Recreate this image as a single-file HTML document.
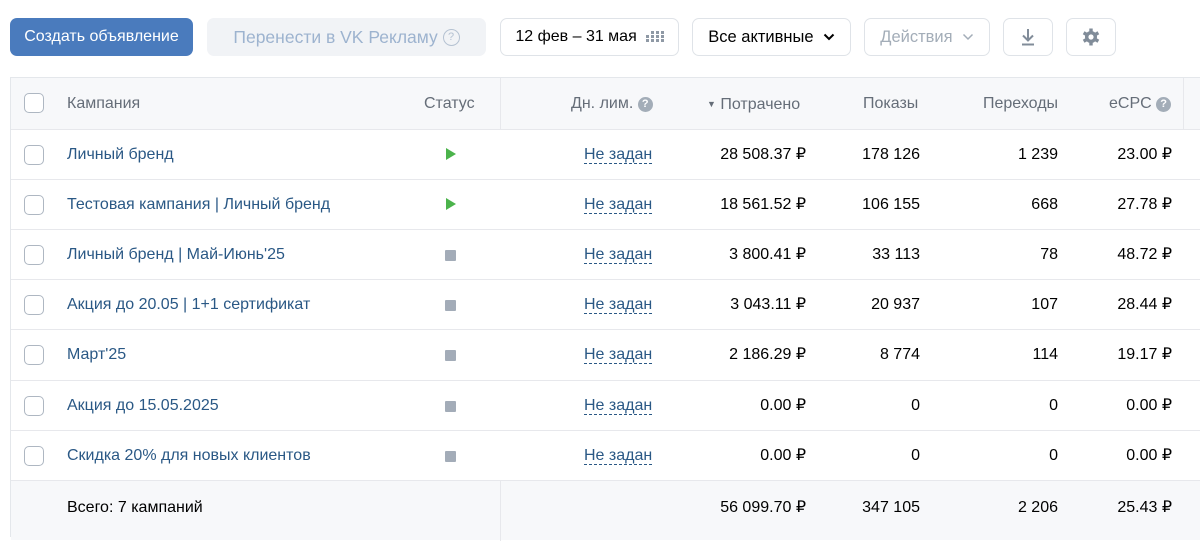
<!DOCTYPE html>
<html><head><meta charset="utf-8"><style>
*{box-sizing:border-box;margin:0;padding:0}
body{width:1200px;height:529px;overflow:hidden;background:#fff;font-family:"Liberation Sans",Arial,sans-serif;font-size:16px;color:#000;position:relative}
.a{position:absolute}
.btn{position:absolute;top:18px;height:38px;border-radius:7px;display:flex;align-items:center;justify-content:center;font-size:16px}
.ob{border:1px solid #dfe3e8;background:#fff}
.tbl{position:absolute;left:10px;top:77px;width:1200px;height:460px;border:1px solid #e4e7eb;border-right:none}
.row{position:absolute;left:0;width:100%;height:50px;border-top:1px solid #e7e8ec}
.cb{position:absolute;left:13px;top:15px;width:20px;height:20px;border:1.5px solid #aeb7c2;border-radius:5px;background:#fff}
.c{position:absolute;top:16px;line-height:18px;white-space:nowrap}
.nm{left:56px;color:#2a5885}
.r{text-align:right}
.lim{left:573px;color:#2a5885;border-bottom:1px dashed #2a5885;line-height:17px}
.play{position:absolute;left:435px;top:18px;width:0;height:0;border-left:10px solid #4bb34b;border-top:6px solid transparent;border-bottom:6px solid transparent}
.stop{position:absolute;left:434px;top:20px;width:11px;height:11px;background:#a3acb8;border-radius:1px}
.h{color:#656d78}
.q{display:inline-block;width:15px;height:15px;border-radius:50%;background:#a3adb8;color:#fff;font-size:11px;font-weight:bold;text-align:center;line-height:15px;vertical-align:1px}
</style></head><body>
<div class="btn" style="left:10px;width:183px;background:#4a7bbd;color:#fff">Создать объявление</div>
<div class="btn" style="left:207px;width:279px;background:#f1f3f6;color:#9db3cf;font-size:17.5px">Перенести в VK Рекламу&nbsp;<span style="display:inline-block;width:17px;height:17px;border:1.5px solid #b5c2d2;border-radius:50%;font-size:11px;line-height:14px;text-align:center;color:#b5c2d2">?</span></div>
<div class="btn ob" style="left:500px;width:179px">12 фев – 31 мая&nbsp;&nbsp;<svg width="18" height="12" viewBox="0 0 18 12"><g fill="#8f99a5"><rect x="0" y="8" width="3" height="3"/><rect x="5" y="0" width="3" height="3"/><rect x="5" y="4" width="3" height="3"/><rect x="5" y="8" width="3" height="3"/><rect x="10" y="0" width="3" height="3"/><rect x="10" y="4" width="3" height="3"/><rect x="10" y="8" width="3" height="3"/><rect x="15" y="0" width="3" height="3"/><rect x="15" y="4" width="3" height="3"/><rect x="15" y="8" width="3" height="3"/><rect x="0" y="4" width="3" height="3"/></g></svg></div>
<div class="btn ob" style="left:692px;width:159px;font-size:16.5px">Все активные&nbsp;&nbsp;<svg width="12" height="8" viewBox="0 0 12 8"><path d="M1.5 1.5L6 6L10.5 1.5" stroke="#000" stroke-width="2" fill="none"/></svg></div>
<div class="btn ob" style="left:864px;width:126px;color:#a3adb8;font-size:16.5px">Действия&nbsp;&nbsp;<svg width="12" height="8" viewBox="0 0 12 8"><path d="M1.5 1.5L6 6L10.5 1.5" stroke="#a3adb8" stroke-width="1.5" fill="none"/></svg></div>
<div class="btn ob" style="left:1003px;width:50px"><svg width="16" height="18" viewBox="0 0 16 18"><path d="M8 1V12M3 7.5L8 12.5L13 7.5M2 16.5H14" stroke="#818c99" stroke-width="2" fill="none"/></svg></div>
<div class="btn ob" style="left:1066px;width:50px"><svg width="20" height="20" viewBox="0 0 20 20"><g fill="#818c99"><circle cx="10" cy="10" r="6"/><g><rect x="8.3" y="1.5" width="3.4" height="17"/><rect x="8.3" y="1.5" width="3.4" height="17" transform="rotate(60 10 10)"/><rect x="8.3" y="1.5" width="3.4" height="17" transform="rotate(120 10 10)"/></g></g><circle cx="10" cy="10" r="2.6" fill="#fff"/></svg></div>

<div class="tbl">
<div class="row" style="top:0;height:51px;border-top:none;background:#f7f8fa">
<div class="cb"></div>
<div class="c h" style="left:56px;top:17px">Кампания</div>
<div class="c h" style="left:413px;top:17px">Статус</div>
<div class="a" style="left:489px;top:0;width:1px;height:51px;background:#e7e8ec"></div>
<div class="c h" style="left:560px;top:17px">Дн. лим. <span class="q">?</span></div>
<div class="c h" style="left:696px;top:17px"><span style="font-size:9px;vertical-align:2px">▼</span> Потрачено</div>
<div class="c h" style="left:852px;top:17px">Показы</div>
<div class="c h" style="left:972px;top:17px">Переходы</div>
<div class="c h" style="left:1098px;top:17px">eCPC <span class="q">?</span></div>
<div class="a" style="left:1172px;top:0;width:1px;height:51px;background:#e7e8ec"></div>
</div>
<div class="row" style="top:51px"><div class="cb"></div><div class="c nm">Личный бренд</div><div class="play"></div><div class="c lim">Не задан</div><div class="c r" style="right:404px">28 508.37 ₽</div><div class="c r" style="right:290px">178 126</div><div class="c r" style="right:152px">1 239</div><div class="c r" style="right:38px">23.00 ₽</div></div>
<div class="row" style="top:101px"><div class="cb"></div><div class="c nm">Тестовая кампания | Личный бренд</div><div class="play"></div><div class="c lim">Не задан</div><div class="c r" style="right:404px">18 561.52 ₽</div><div class="c r" style="right:290px">106 155</div><div class="c r" style="right:152px">668</div><div class="c r" style="right:38px">27.78 ₽</div></div>
<div class="row" style="top:151px"><div class="cb"></div><div class="c nm">Личный бренд | Май-Июнь'25</div><div class="stop"></div><div class="c lim">Не задан</div><div class="c r" style="right:404px">3 800.41 ₽</div><div class="c r" style="right:290px">33 113</div><div class="c r" style="right:152px">78</div><div class="c r" style="right:38px">48.72 ₽</div></div>
<div class="row" style="top:201px"><div class="cb"></div><div class="c nm">Акция до 20.05 | 1+1 сертификат</div><div class="stop"></div><div class="c lim">Не задан</div><div class="c r" style="right:404px">3 043.11 ₽</div><div class="c r" style="right:290px">20 937</div><div class="c r" style="right:152px">107</div><div class="c r" style="right:38px">28.44 ₽</div></div>
<div class="row" style="top:251px"><div class="cb"></div><div class="c nm">Март'25</div><div class="stop"></div><div class="c lim">Не задан</div><div class="c r" style="right:404px">2 186.29 ₽</div><div class="c r" style="right:290px">8 774</div><div class="c r" style="right:152px">114</div><div class="c r" style="right:38px">19.17 ₽</div></div>
<div class="row" style="top:302px"><div class="cb"></div><div class="c nm">Акция до 15.05.2025</div><div class="stop"></div><div class="c lim">Не задан</div><div class="c r" style="right:404px">0.00 ₽</div><div class="c r" style="right:290px">0</div><div class="c r" style="right:152px">0</div><div class="c r" style="right:38px">0.00 ₽</div></div>
<div class="row" style="top:352px"><div class="cb"></div><div class="c nm">Скидка 20% для новых клиентов</div><div class="stop"></div><div class="c lim">Не задан</div><div class="c r" style="right:404px">0.00 ₽</div><div class="c r" style="right:290px">0</div><div class="c r" style="right:152px">0</div><div class="c r" style="right:38px">0.00 ₽</div></div>
<div class="row" style="top:402px;height:60px;background:#f7f8fa"><div class="c" style="left:56px;top:18px">Всего: 7 кампаний</div><div class="a" style="left:489px;top:0;width:1px;height:60px;background:#e7e8ec"></div><div class="c r" style="right:404px;top:18px">56 099.70 ₽</div><div class="c r" style="right:290px;top:18px">347 105</div><div class="c r" style="right:152px;top:18px">2 206</div><div class="c r" style="right:38px;top:18px">25.43 ₽</div></div>
</div>
</body></html>
